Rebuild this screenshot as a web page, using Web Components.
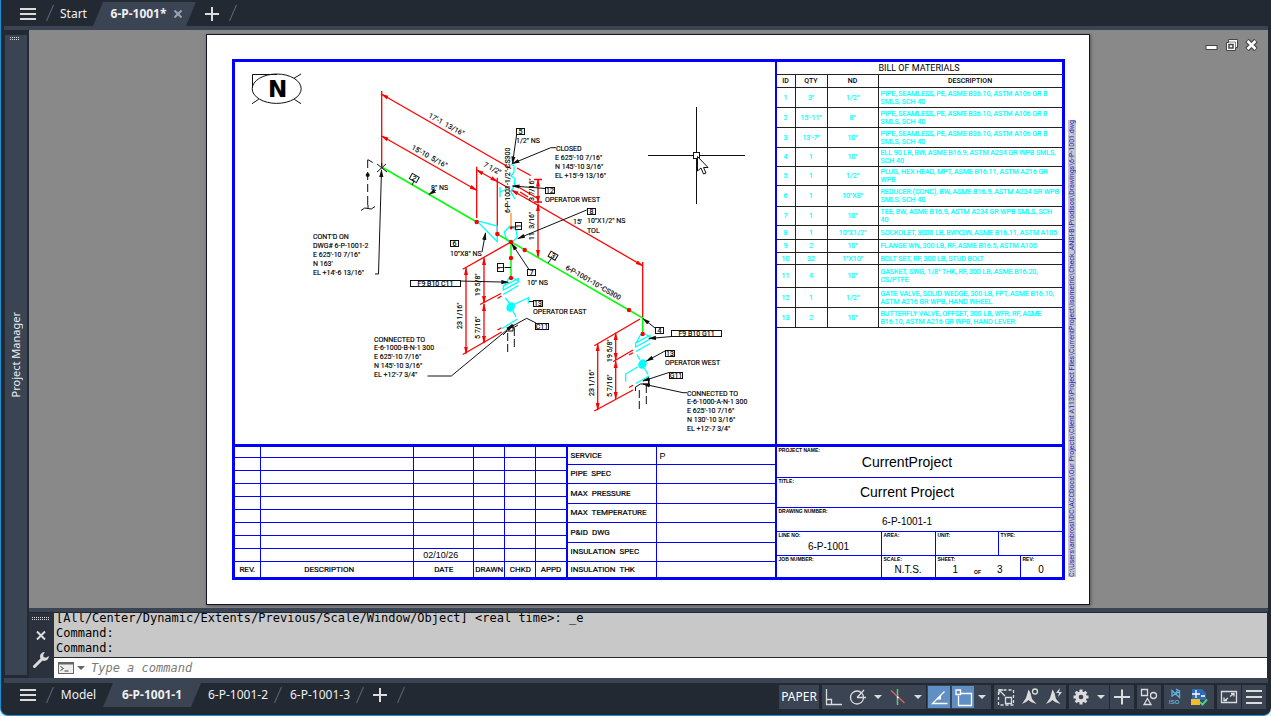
<!DOCTYPE html>
<html lang="en">
<head>
<meta charset="utf-8">
<title>6-P-1001</title>
<style>
  :root {
    --dark: #222933;
    --slate: #3b4453;
    --light: #dcdcdc;
    --edge: #1b8fd0;
    --ink: #0000ff;
    --cyan: #00ffff;
    --ui: "Noto Sans", "Open Sans", sans-serif;
    --mono: "DejaVu Sans Mono", "Liberation Mono", monospace;
    --cad: Roboto, "Liberation Sans", sans-serif;
    --plain: "Liberation Sans", Arial, sans-serif;
  }
  html, body { margin: 0; height: 100%; }
  body { background: #e6eef4; overflow: hidden; font-family: var(--ui); }
</style>
</head>
<body>
<cad-window>
  <tab-strip slot="top" label="Drawings">
    <doc-tab style="min-width:39px">Start</doc-tab>
    <doc-tab active closable style="min-width:103px">6-P-1001*</doc-tab>
  </tab-strip>
  <side-palette slot="side">Project Manager</side-palette>
  <model-canvas slot="canvas">
    <drawing-sheet>
      <iso-drawing slot="drawing"></iso-drawing>
      <bom-table slot="bom"></bom-table>
      <revision-table slot="revisions"></revision-table>
      <spec-table slot="specs"></spec-table>
      <title-block slot="title"></title-block>
      <span slot="path">C:\Users\ambrosl\DC\ACCDocs\Our Projects\Client A113\Project Files\CurrentProject\Isometric\Check_ANSI-B\ProdIsos\Drawings\6-P-1001.dwg</span>
    </drawing-sheet>
  </model-canvas>
  <command-line slot="command"></command-line>
  <tab-strip slot="layouts" label="Layouts" bottom>
    <doc-tab style="min-width:49px">Model</doc-tab>
    <doc-tab active style="min-width:98px">6-P-1001-1</doc-tab>
    <doc-tab divided style="min-width:81px">6-P-1001-2</doc-tab>
    <doc-tab divided style="min-width:82px">6-P-1001-3</doc-tab>
  </tab-strip>
  <status-bar slot="status"></status-bar>
</cad-window>

<script>
const define = (name, html, setup) => {
  const template = document.createElement('template');
  template.innerHTML = html;
  customElements.define(name, class extends HTMLElement {
    constructor() {
      super();
      this.attachShadow({ mode: 'open' }).append(template.content.cloneNode(true));
    }
    connectedCallback() { if (setup) setup(this, this.shadowRoot); }
  });
};

/* ---------- application frame ---------- */
define('cad-window', `
<style>
  :host { display: grid; box-sizing: border-box; height: 100vh; overflow: hidden; background: var(--dark);
    grid-template: 26px 4px minmax(0, 1fr) 4px 66px 5px 32px / 25px minmax(0, 1fr);
    padding: 0 3px 0 3px; border-left: 1px solid var(--edge); border-bottom: 1px solid var(--edge);
    border-radius: 0 0 8px 8px; }
  .top { grid-area: 1 / 1 / 2 / 3; }
  .band { background: var(--slate); }
  .b1 { grid-area: 2 / 1 / 3 / 3; }
  .side { grid-area: 3 / 1 / 6 / 2; display: grid; }
  .canvas { grid-area: 3 / 2 / 4 / 3; min-height: 0; display: grid; }
  .b2 { grid-area: 4 / 2 / 5 / 3; }
  .command { grid-area: 5 / 2 / 6 / 3; display: grid; }
  .b3 { grid-area: 6 / 1 / 7 / 3; }
  .bottom { grid-area: 7 / 1 / 8 / 3; display: flex; justify-content: space-between; }
</style>
<header class="top"><slot name="top"></slot></header>
<div class="band b1"></div>
<aside class="side"><slot name="side"></slot></aside>
<main class="canvas"><slot name="canvas"></slot></main>
<div class="band b2"></div>
<section class="command"><slot name="command"></slot></section>
<div class="band b3"></div>
<footer class="bottom"><slot name="layouts"></slot><slot name="status"></slot></footer>
`);

/* ---------- tab strips ---------- */
define('tab-strip', `
<style>
  :host { display: block; --tab-inset: 2px; --tab-height: 26px; }
  :host([bottom]) { --tab-inset: 0px; --tab-height: 24px; }
  nav { display: flex; height: var(--tab-height); align-items: stretch; }
  button { border: 0; background: none; padding: 0; display: grid; place-items: center; }
  :host(:not([bottom])) button { padding-top: 2px; }
  .menu { width: 16px; margin: 0 10px 0 16px; }
  .add { width: 14px; margin: 0 10px 0 9px; }
  svg { display: block; }
  .slash { width: 8px; height: var(--tab-height); }
</style>
<nav>
  <button class="menu" aria-label="Menu"><svg width="16" height="12"><path d="M0 1h16M0 6h16M0 11h16" stroke="#dcdcdc" stroke-width="2"/></svg></button>
  <svg class="slash" viewBox="0 0 8 24"><path d="M.5 20L7.500 4" stroke="#566070" stroke-width="1.200"/></svg>
  <slot></slot>
  <button class="add" aria-label="New"><svg width="14" height="14"><path d="M7 0v14M0 7h14" stroke="#dcdcdc" stroke-width="2"/></svg></button>
  <svg class="slash" viewBox="0 0 8 24"><path d="M.5 20L7.500 4" stroke="#566070" stroke-width="1.200"/></svg>
</nav>
`, (el, root) => root.querySelector('nav').setAttribute('aria-label', el.getAttribute('label')));

define('doc-tab', `
<style>
  :host { display: flex; box-sizing: border-box; align-items: center; justify-content: center; padding-top: var(--tab-inset); }
  button { border: 0; background: none; padding: 0; color: #f0f0f0; font: 12px/16px var(--ui); white-space: nowrap; }
  :host([active]) { background: var(--slate);
    clip-path: polygon(10px var(--tab-inset), 100% var(--tab-inset), calc(100% - 10px) 100%, 0 100%); }
  :host([active]) button { font-weight: 700; }
  .close, .slash { display: none; }
  :host([closable]) { padding-left: 4px; }
  :host([closable]) .close { display: block; margin-left: 8px; }
  :host([divided]) { justify-content: flex-end; }
  :host([divided]) .slash { display: block; margin-left: 6px; }
  svg { display: block; }
</style>
<button class="name"><slot></slot></button>
<button class="close" aria-label="Close"><svg width="8" height="8"><path d="M.5 .5l7 7M7.500 .5l-7 7" stroke="#9aa3af" stroke-width="2"/></svg></button>
<svg class="slash" width="8" height="24"><path d="M.5 20L7.500 4" stroke="#566070" stroke-width="1.200"/></svg>
`);

/* ---------- docked palette ---------- */
define('side-palette', `
<style>
  :host { display: flex; flex-direction: column; align-items: center; background: var(--slate);
    margin: 5px 2px 3px 1px; }
  .grip { display: block; margin: 2px 3px 0 0; }
  span { writing-mode: vertical-rl; transform: rotate(180deg); color: #f0f0f0;
    font: 11px/20px var(--ui); margin: auto 0; padding-top: 6px; }
</style>
<svg class="grip" width="10" height="4"><path d="M0 .5h10M0 2.500h10" stroke="#dcdcdc" stroke-dasharray="1 1"/></svg><span><slot></slot></span>
`);

/* ---------- drawing canvas ---------- */
define('model-canvas', `
<style>
  :host { display: flex; justify-content: center; position: relative; background: #898989; padding: 4px 0 3px; min-height: 0; }
  .controls { position: absolute; top: 9px; right: 10px; display: flex; gap: 7px; }
  button { border: 0; background: none; padding: 0; width: 13px; height: 12px; }
  svg { display: block; }
</style>
<slot></slot>
<div class="controls">
  <button aria-label="Minimize"><svg width="13" height="12"><rect x="1" y="6.500" width="11" height="4" fill="#fff" stroke="#444"/></svg></button>
  <button aria-label="Restore"><svg width="13" height="12"><path d="M3.500 .5h9v8h-2v3h-9v-8h2z" fill="#fff" stroke="#444"/><path d="M4 5.500h4v3.500H4z" fill="#fff" stroke="#444" stroke-width="1.500"/><path d="M4 3h6.500v5" stroke="#666" stroke-width=".8" fill="none"/></svg></button>
  <button aria-label="Close"><svg width="13" height="12"><path d="M2 1.500l9 9M11 1.500l-9 9" stroke="#444" stroke-width="5"/><path d="M2.500 2l8 8M10.500 2l-8 8" stroke="#fff" stroke-width="2.500"/></svg></button>
</div>
`);

define('drawing-sheet', `
<style>
  :host { display: grid; box-sizing: border-box; flex: 0 1 884px; min-height: 0; margin-right: 2px; background: #fff; border: 1px solid #15152a;
    box-shadow: 1px 1px 3px #555; grid-template-columns: minmax(0, 1fr) 24px; padding: 24px 0 24px 25px; }
  .frame { box-sizing: border-box; border: 3px solid var(--ink); display: grid; min-height: 0;
    grid-template: minmax(0, 1fr) auto / minmax(0, 540fr) minmax(0, 287fr); }
  .drawing { min-height: 0; display: grid; border-bottom: 3px solid var(--ink); }
  .bom { border-left: 2px solid var(--ink); border-bottom: 3px solid var(--ink); }
  .tables { display: grid; grid-template-columns: 333fr 207fr; }
  .title { border-left: 2px solid var(--ink); display: grid; }
  .path { align-self: end; justify-self: start; margin: 0 0 3px 3px; writing-mode: vertical-rl; transform: rotate(180deg);
    background: #c8c8c8; color: #1c1cd8; font: 7px/8px var(--cad); white-space: nowrap; }
</style>
<div class="frame">
  <div class="drawing"><slot name="drawing"></slot></div>
  <div class="bom"><slot name="bom"></slot></div>
  <div class="tables"><slot name="revisions"></slot><slot name="specs"></slot></div>
  <div class="title"><slot name="title"></slot></div>
</div>
<div class="path"><slot name="path"></slot></div>
`);

/* ---------- piping isometric ---------- */
define('iso-drawing', `
<style>
  :host { display: block; min-height: 0; }
  svg { display: block; width: 100%; height: 100%; }
  text { font: 7px var(--cad); fill: #000; white-space: pre; stroke: #000; stroke-width: .15px; }
  .r { stroke: #f00; stroke-width: 1.300; fill: none; }
  .k { stroke: #111; stroke-width: 1; fill: none; }
  .g { stroke: #0f0; stroke-width: 1.500; fill: none; }
  .c { stroke: #0ff; stroke-width: 1.300; fill: none; }
  .m { font-size: 7px; text-anchor: middle; }
  .north { font: 700 23px "DejaVu Sans", sans-serif; text-anchor: middle; }
</style>
<svg viewBox="235 62 540 382" role="img" aria-label="Piping isometric">
  <defs>
    <marker id="ra" markerUnits="userSpaceOnUse" markerWidth="8" markerHeight="5" refX="7" refY="2.500" orient="auto-start-reverse"><path d="M0 .5L8 2.500L0 4.500z" fill="#f00"/></marker>
    <marker id="ka" markerUnits="userSpaceOnUse" markerWidth="8" markerHeight="5" refX="7" refY="2.500" orient="auto-start-reverse"><path d="M0 .4L8 2.500L0 4.600z" fill="#111"/></marker>
  </defs>

  <!-- north symbol -->
  <g class="k"><ellipse cx="276.700" cy="88.700" rx="24.500" ry="14.700"/><path d="M252.500 88V74.500H277M301 74L294 78.300M252 103.700L258.700 99.300M301 103.700L294.300 99.300"/></g>
  <text class="north" x="277.500" y="97">N</text>

  <!-- dimension lines -->
  <g class="r">
    <path d="M381.700 91V166M476.700 166.700V218M497.300 177.700V233M642.700 262V317"/>
    <g marker-start="url(#ra)">
      <path d="M381.700 94.300L503 164"/>
      <path d="M381.700 136L476.700 190.300" marker-end="url(#ra)"/>
      <path d="M476.700 170L497.300 181.500" marker-end="url(#ra)"/>
      <path d="M511.500 190L642.700 265.700" marker-end="url(#ra)"/>
      <path d="M538 179.500V203" marker-end="url(#ra)"/>
      <path d="M538 204V257" marker-end="url(#ra)"/>
      <path d="M466 268V353.500" marker-end="url(#ra)"/>
      <path d="M484 258V303" marker-end="url(#ra)"/>
      <path d="M484 304V343" marker-end="url(#ra)"/>
      <path d="M597.700 344V410" marker-end="url(#ra)"/>
      <path d="M615.700 333V360" marker-end="url(#ra)"/>
      <path d="M615.700 361V399" marker-end="url(#ra)"/>
    </g>
    <path d="M497.300 181.500L510 189M503 164L511 168.500M517 168L530.700 175.500M534 179.500H542M515 185L537 198M534 202H542M520 192l8 5"/>
    <path d="M462.700 269.300L511 242M480 304.500L501 293.500M497.500 298.500l4-2.500M462.700 354.500L501.700 332M497.500 330l4-2.300"/>
    <path d="M594.300 345.700L640 319M613 361.700L633 350M629 355l4-2.300M594.300 411L633 390M629 387.500l4-2.300"/>
  </g>

  <!-- valves, reducers and flanges -->
  <g class="c">
    <path d="M476.700 220.700L497.300 226V241.700z"/>
    <path d="M511 164L514 166V172L511 176L515 178.500L514 184M500 187V197M500 192L507 189M515.500 183L511 192L515 199"/>
    <path d="M510 226L504.300 232L506.700 240L511 242.700L517.300 237.700L516 230z"/>
    <path d="M509 278L503.500 287M513 278L518.300 281M503.300 290V286L518.300 278.500V282z M503.300 294.500L518.300 285.500M505.500 298L510 304M513 305L528.300 297.700V303.500M512.500 310L516 317M502 328.500L517.500 319"/>
    <path d="M641 334L636 343M645 334L650 337M635.700 347V343L650 335.500V339z M636 351.500L650 343.500M637 354.500L640 360M638 366.700L625.700 374V381.700M644.300 368L648 374.500M635.700 383.500L649.500 375.700"/>
  </g>
  <ellipse cx="510.700" cy="307" rx="4" ry="5" fill="#0ff" transform="rotate(30 510.700 307)"/>
  <ellipse cx="642.500" cy="364" rx="4" ry="5" fill="#0ff" transform="rotate(30 642.500 364)"/>

  <!-- pipe runs -->
  <path class="g" d="M381.700 167L476.700 222M497.300 234L642.700 318V334M511 242V278"/>
  <path d="M511 213V227" stroke="#ff9a3c" stroke-width="1.500"/>
  <g fill="#f00"><circle cx="476.700" cy="222" r="2.200"/><circle cx="497.300" cy="234" r="2.200"/><circle cx="511" cy="242" r="2.200"/><circle cx="524.700" cy="250" r="2.200"/><circle cx="511" cy="258" r="2.200"/><circle cx="511" cy="278" r="2.200"/><circle cx="511" cy="228" r="1.500"/><circle cx="629" cy="310" r="2.200"/><circle cx="642.700" cy="334" r="2.200"/></g>

  <!-- continuation mark -->
  <g class="k">
    <path d="M377 164l10 8M377 172l9-8M381.700 163v4"/>
    <path d="M367.700 159.500l5 3M367.700 160v8M367.700 172v8M367.700 184v8M367.700 196v9"/>
    <path d="M361 210.500q4-4 7-2t7-2M368 205v3"/>
    <path d="M375 274H378.500L381.500 170" marker-end="url(#ka)"/>
  </g>
  <circle cx="367.700" cy="175" r="2" fill="#111"/>

  <!-- leaders -->
  <g class="k" marker-end="url(#ka)">
    <path d="M436 190L429 194.500"/>
    <path d="M516.700 134L512.500 163.500"/>
    <path d="M556 147.700H550.700L512.500 163.500"/>
    <path d="M545.700 188.500L512.500 186"/>
    <path d="M586.700 210L518 238.500"/>
    <path d="M529 269.500L511.700 243.500"/>
    <path d="M460 281L508.300 282.200"/>
    <path d="M482 252L485.500 233"/>
    <path d="M536 323L526.700 318.300L507 329"/>
    <path d="M427.500 376H451.300L513 325"/>
    <path d="M655 328L643 318.500"/>
    <path d="M671.700 336.500L649 338.500"/>
    <path d="M665 351L646.500 361"/>
    <path d="M669 372.500L643 381"/>
    <path d="M687 392.700H683L643 384"/>
  </g>
  <path class="k" d="M533 301.500l-4 0M414 181l-2 4M551 259l-3 4M504.500 267.500H511M515 227H511"/>
  <g class="k" stroke-dasharray="8 3"><path d="M507.700 333V352M514.300 328V348M639.300 390V410M646.300 385V405"/></g>
  <path class="k" d="M503 335l4-4h6v-3l5-3M635.500 391v-4l5-3h8v-3M644 380h5v5"/>

  <!-- item number boxes -->
  <g class="k">
    <rect x="516.500" y="128.500" width="8" height="6"/><rect x="545.500" y="187.500" width="9" height="6"/>
    <rect x="587.500" y="208.500" width="8" height="6"/><rect x="515.500" y="222.500" width="6" height="7"/>
    <rect x="497.500" y="263.500" width="6" height="8"/><rect x="527.500" y="269.500" width="8" height="6"/>
    <rect x="450.500" y="240.500" width="8" height="6"/><rect x="410.500" y="280.500" width="50" height="6"/>
    <rect x="533.500" y="300.500" width="9" height="6"/><rect x="535.500" y="323.500" width="13" height="6"/>
    <rect x="655.500" y="327.500" width="8" height="6"/><rect x="671.500" y="330.500" width="50" height="6"/>
    <rect x="665.500" y="350.500" width="9" height="6"/><rect x="669.500" y="372.500" width="13" height="6"/>
    <rect x="410.300" y="175" width="8" height="6" transform="rotate(30 414.300 178)"/>
    <rect x="549" y="252.700" width="8" height="6" transform="rotate(30 553 255.700)"/>
  </g>
  <g class="m">
    <text x="520.500" y="134">5</text><text x="550" y="193">12</text><text x="591.500" y="214">8</text>
    <text x="531.500" y="275">7</text><text x="454.500" y="246">6</text><text x="538" y="306">13</text>
    <text x="542" y="329">C11</text><text x="659.500" y="333">4</text><text x="670" y="356">13</text>
    <text x="676" y="378">G11</text><text x="435.500" y="286">F9 B10 C11</text><text x="696.500" y="336">F9 B10 G11</text>
    <text transform="translate(413 180.500) rotate(30)">2</text><text transform="translate(552 258) rotate(30)">3</text>
    <text transform="translate(503 267.500) rotate(-90)">1</text><text transform="translate(521 226) rotate(-90)">1</text>
  </g>

  <!-- labels -->
  <text transform="translate(428 117) rotate(29)">17'-1  13/16"</text>
  <text transform="translate(411 149) rotate(29)">15'-10  5/16"</text>
  <text transform="translate(483 166) rotate(29)">7 1/2"</text>
  <text x="431" y="190">8" NS</text>
  <text transform="translate(510 213) rotate(-90)">6-P-1001-1/2"-CS300</text>
  <text x="516" y="143">1/2" NS</text>
  <text x="556" y="151">CLOSED</text><text x="555" y="160">E 625'-10 7/16"</text><text x="555" y="169">N 145'-10 3/16"</text><text x="555" y="178">EL +15'-9 13/16"</text>
  <text transform="translate(534 201) rotate(-90)">3 7/16"</text>
  <text transform="translate(534 240) rotate(-90)">11  3/16"</text>
  <text x="545" y="202">OPERATOR WEST</text>
  <text x="573" y="224">15'</text><text x="587" y="223">10"X1/2" NS</text><text x="587" y="233">TOL</text>
  <text transform="translate(565 269) rotate(30)">6-P-1001-10"-CS300</text>
  <text x="527" y="285">10" NS</text>
  <text x="450" y="256">10"X8" NS</text>
  <text x="313" y="239">CONT'D ON</text><text x="313" y="248">DWG# 6-P-1001-2</text><text x="313" y="257">E 625'-10 7/16"</text><text x="313" y="266">N 163'</text><text x="313" y="275">EL +14'-6 13/16"</text>
  <text transform="translate(480 296) rotate(-90)">19 5/8"</text>
  <text transform="translate(462 329) rotate(-90)">23 1/16"</text>
  <text transform="translate(480 339) rotate(-90)">5 7/16"</text>
  <text x="533" y="314">OPERATOR EAST</text>
  <text x="374" y="342">CONNECTED TO</text><text x="374" y="350">E-6-1000-B-N-1 300</text><text x="374" y="359">E 625'-10 7/16"</text><text x="374" y="368">N 145'-10 3/16"</text><text x="374" y="377">EL +12'-7 3/4"</text>
  <text transform="translate(612 362) rotate(-90)">19 5/8"</text>
  <text transform="translate(594 396) rotate(-90)">23 1/16"</text>
  <text transform="translate(612 397) rotate(-90)">5 7/16"</text>
  <text x="665" y="365">OPERATOR WEST</text>
  <text x="687" y="396">CONNECTED TO</text><text x="687" y="404">E-6-1000-A-N-1 300</text><text x="687" y="413">E 625'-10 7/16"</text><text x="687" y="422">N 130'-10 3/16"</text><text x="687" y="431">EL +12'-7 3/4"</text>

  <!-- crosshair and pointer -->
  <path class="k" d="M648 155.500H745M696.500 107V204"/>
  <rect x="693.500" y="152.500" width="6" height="6" fill="#fff" stroke="#111"/>
  <path d="M697.500 156.500V171L701 168L703.500 174L706 173L703.500 167.500H708z" fill="#fff" stroke="#111"/>
</svg>
`);

/* ---------- bill of materials ---------- */
const BOM = [
  [20, '1', '3"', '1/2"', 'PIPE, SEAMLESS, PE, ASME B36.10, ASTM A106 GR B<br>SMLS, SCH 40'],
  [20, '2', `15'-11"`, '8"', 'PIPE, SEAMLESS, PE, ASME B36.10, ASTM A106 GR B<br>SMLS, SCH 40'],
  [20, '3', `13'-7"`, '10"', 'PIPE, SEAMLESS, PE, ASME B36.10, ASTM A106 GR B<br>SMLS, SCH 40'],
  [19, '4', '1', '10"', 'ELL 90 LR, BW, ASME B16.9, ASTM A234 GR WPB SMLS,<br>SCH 40'],
  [19, '5', '1', '1/2"', 'PLUG, HEX HEAD, MPT, ASME B16.11, ASTM A216 GR<br>WPB'],
  [21, '6', '1', '10"X8"', 'REDUCER (CONC), BW, ASME B16.9, ASTM A234 GR WPB<br>SMLS, SCH 40'],
  [19, '7', '1', '10"', 'TEE, BW, ASME B16.9, ASTM A234 GR WPB SMLS, SCH<br>40'],
  [14, '8', '1', '10"X1/2"', 'SOCKOLET, 3000 LB, BWXSW, ASME B16.11, ASTM A105'],
  [13, '9', '2', '10"', 'FLANGE WN, 300 LB, RF, ASME B16.5, ASTM A105'],
  [12, '10', '32', '1"X10"', 'BOLT SET, RF, 300 LB, STUD BOLT'],
  [23, '11', '4', '10"', 'GASKET, SWG, 1/8" THK, RF, 300 LB, ASME B16.20,<br>CS/PTFE'],
  [20, '12', '1', '1/2"', 'GATE VALVE, SOLID WEDGE, 300 LB, FPT, ASME B16.10,<br>ASTM A216 GR WPB, HAND WHEEL'],
  [20, '13', '2', '10"', 'BUTTERFLY VALVE, OFFSET, 300 LB, WFR, RF, ASME<br>B16.10, ASTM A216 GR WPB, HAND LEVER'],
];
define('bom-table', `
<style>
  :host { display: block; }
  table { width: 100%; border-spacing: 0; table-layout: fixed; font: 7px/8px var(--cad); }
  caption { height: 12px; border-bottom: 1px solid #222; font: 9px/12px var(--cad); color: #000; }
  th, td { box-sizing: border-box; padding: 0; border-bottom: 1px solid #222; border-right: 1px solid #222; text-align: center;
    vertical-align: middle; white-space: nowrap; }
  th { font-weight: 500; line-height: 8px; height: 13px; color: #000; }
  td { color: var(--cyan); -webkit-text-stroke: .2px var(--cyan); }
  th:last-child, td:last-child { border-right: 0; }
  td:last-child { text-align: left; padding-left: 2px; }
  col:nth-child(1) { width: 19px; } col:nth-child(2) { width: 32px; } col:nth-child(3) { width: 51px; }
</style>
<table><caption>BILL OF MATERIALS</caption><colgroup><col><col><col><col></colgroup>
<thead><tr><th>ID</th><th>QTY</th><th>ND</th><th>DESCRIPTION</th></tr></thead>
<tbody>${BOM.map(([h, ...cells]) => `<tr style="height:${h}px">${cells.map(c => `<td>${c}</td>`).join('')}</tr>`).join('')}</tbody></table>
`);

/* ---------- revisions ---------- */
define('revision-table', `
<style>
  :host { display: block; }
  table { width: 100%; border-spacing: 0; table-layout: fixed; font: 8px/10px var(--cad); }
  td, th { box-sizing: border-box; padding: 0; height: 13px; border-right: 1px solid var(--ink); border-bottom: 1px solid var(--ink); text-align: center; white-space: nowrap; font-weight: 400; }
  tr:first-child td { height: 11px; }
  tr:last-child th { height: 15px; border-bottom: 0; -webkit-text-stroke: .2px #000; }
  td:last-child, th:last-child { border-right-width: 2px; }
  td { font: 9px/10px var(--plain); padding-right: 6px; }
  .wide { padding-right: 16px; }
  col:nth-child(1) { width: 8%; } col:nth-child(2) { width: 46%; } col:nth-child(3) { width: 18%; } col:nth-child(n+4) { width: auto; }
</style>
<table><colgroup><col><col><col><col><col><col></colgroup>
${'<tr><td></td><td></td><td></td><td></td><td></td><td></td></tr>'.repeat(8)}
<tr><td></td><td></td><td>02/10/26</td><td></td><td></td><td></td></tr>
<tr><th>REV.</th><th class="wide">DESCRIPTION</th><th>DATE</th><th>DRAWN</th><th>CHKD</th><th>APPD</th></tr></table>
`);

/* ---------- line specification ---------- */
const SPECS = [[18, 'SERVICE', 'P'], [19, 'PIPE&nbsp; SPEC', ''], [20, 'MAX&nbsp; PRESSURE', ''], [19, 'MAX&nbsp; TEMPERATURE', ''], [20, 'P&amp;ID&nbsp; DWG', ''], [19, 'INSULATION&nbsp; SPEC', ''], [15, 'INSULATION&nbsp; THK', '']];
define('spec-table', `
<style>
  :host { display: block; }
  table { width: 100%; border-spacing: 0; table-layout: fixed; }
  th, td { box-sizing: border-box; padding: 0 0 0 3px; text-align: left; white-space: nowrap; border-bottom: 1px solid var(--ink); }
  th { width: 43%; border-right: 1px solid var(--ink); font: 8px/10px var(--cad); -webkit-text-stroke: .2px #000; }
  td { font: 9px/10px var(--plain); }
  tr:last-child > * { border-bottom: 0; }
</style>
<table>${SPECS.map(([h, k, v]) => `<tr style="height:${h}px"><th scope="row">${k}</th><td>${v}</td></tr>`).join('')}</table>
`);

/* ---------- title block ---------- */
define('title-block', `
<style>
  :host { display: grid; grid-template-rows: 31px 30px 24px 24px 21px; color: #000; }
  .row { display: grid; border-bottom: 1px solid var(--ink); }
  .row:last-child { border-bottom: 0; }
  .a { grid-template-columns: 105fr 54fr 63fr 63fr; }
  .b { grid-template-columns: 105fr 54fr 85fr 41fr; }
  .cell { border-right: 1px solid var(--ink); display: flex; flex-direction: column; min-width: 0; }
  .cell:last-child { border-right: 0; }
  small { font: 700 5px/6px var(--plain); padding-left: 2px; }
  .v { flex: 1; display: flex; align-items: center; justify-content: center; font: 10px/11px var(--plain); }
  .big { font: 14px/15px var(--plain); padding: 0 24px 6px 0; }
  .wide { padding: 0 24px 2px 0; }
  .sheet { gap: 16px; }
  .sheet i { font: 700 5px/6px var(--plain); padding-top: 4px; }
</style>
<div class="row"><div class="cell"><small>PROJECT NAME:</small><div class="v big">CurrentProject</div></div></div>
<div class="row"><div class="cell"><small>TITLE:</small><div class="v big">Current Project</div></div></div>
<div class="row"><div class="cell"><small>DRAWING NUMBER:</small><div class="v wide">6-P-1001-1</div></div></div>
<div class="row a"><div class="cell"><small>LINE NO:</small><div class="v">6-P-1001</div></div><div class="cell"><small>AREA:</small></div><div class="cell"><small>UNIT:</small></div><div class="cell"><small>TYPE:</small></div></div>
<div class="row b"><div class="cell"><small>JOB NUMBER:</small></div><div class="cell"><small>SCALE:</small><div class="v">N.T.S.</div></div><div class="cell"><small>SHEET:</small><div class="v sheet"><span>1</span><i>OF</i><span>3</span></div></div><div class="cell"><small>REV:</small><div class="v">0</div></div></div>
`);

/* ---------- command window ---------- */
define('command-line', `
<style>
  :host { display: grid; grid-template-columns: 25px minmax(0, 1fr); padding-top: 1px; margin-right: 1px; }
  .grip { background: #2b323e; display: flex; flex-direction: column; align-items: center; padding-right: 2px; }
  .dots { margin: 4px 0 10px; }
  .grip button { border: 0; background: none; padding: 0; margin-bottom: 12px; }
  svg { display: block; }
  .body { display: grid; grid-template-rows: 44px 20px; gap: 1px; }
  .log { background: #c8c8c8; overflow: hidden; display: flex; flex-direction: column; justify-content: flex-end; padding: 0 2px 1px; }
  p { margin: 0; font: 12px/15px var(--mono); color: #000; white-space: pre; flex: none; }
  label { background: #fff; display: flex; align-items: center; padding-left: 4px; gap: 3px; }
  input { flex: 1; border: 0; outline: 0; padding: 0; background: none; font: italic 12px/16px var(--mono); margin-left: 3px; }
  input::placeholder { color: #7a7a7a; opacity: 1; }
</style>
<div class="grip"><svg class="dots" width="17" height="4"><path d="M0 .5h17M0 2.500h17" stroke="#dcdcdc" stroke-dasharray="1 1"/></svg>
  <button aria-label="Close"><svg width="10" height="9"><path d="M1 .5l8 8M9 .5l-8 8" stroke="#dcdcdc" stroke-width="2"/></svg></button>
  <button aria-label="Customize"><svg width="16" height="16"><path d="M1.500 14.500L9 7" stroke="#dcdcdc" stroke-width="3" stroke-linecap="round"/><path d="M11.800 0A4.500 4.500 0 0 0 7.500 6.500L9.500 8.500A4.500 4.500 0 0 0 15.800 4L13 5.800L10.500 5L10.300 2.800z" fill="#dcdcdc"/></svg></button>
</div>
<div class="body">
  <div class="log"><p>[All/Center/Dynamic/Extents/Previous/Scale/Window/Object] &lt;real time&gt;: _e</p><p>Command:</p><p>Command:</p></div>
  <label aria-label="Command"><svg width="16" height="13"><rect x=".5" y=".5" width="15" height="11" fill="#eee" stroke="#666"/><path d="M0 1.500h16" stroke="#666" stroke-width="2"/><path d="M2.500 4.500l3 2-3 2M6.500 9h4" fill="none" stroke="#444"/></svg><svg width="8" height="5"><path d="M0 0h8l-4 4z" fill="#666"/></svg><input type="text" placeholder="Type a command"></label>
</div>
`);

/* ---------- status bar ---------- */
const arrow = label => `<button class="arrow" aria-label="${label}"><svg width="8" height="4"><path d="M0 0h8L4 4z" fill="#dcdcdc"/></svg></button>`;
const icon = (label, body, cls = '') => `<button class="${cls}" aria-label="${label}"><svg viewBox="0 0 24 24">${body}</svg></button>`;
const scaleMark = '<path d="M10.500 4.500L12.500 8L14 14L18.500 19L13 17L10.500 15L8 17L4 19L8 13L9.500 8z" fill="#dcdcdc" stroke="none"/>';
const teeth = [0, 45, 90, 135].map(a => `<path d="M12 4.500v15" stroke-width="3" transform="rotate(${a} 12 12)"/>`).join('');
define('status-bar', `
<style>
  :host { display: flex; gap: 1px; padding: 2px 2px 0 0; align-items: flex-start; }
  .g { display: flex; height: 24px; background: var(--slate); }
  .s { margin-left: 2px; }
  button { border: 0; background: none; padding: 0; width: 24px; height: 24px; display: grid; place-items: center; color: #fff; }
  .paper { width: 40px; font: 12px/16px var(--ui); }
  .arrow { width: 16px; }
  svg { display: block; overflow: visible; }
  button:not(.arrow) > svg { width: 24px; height: 24px; fill: none; stroke: #dcdcdc; stroke-width: 1.300; }
  .snap { padding: 0 1px; }
  .on { width: 22px; height: 22px; background: #5f8fc4; margin: 1px 2px 0 0; }
  .on + .arrow { margin-left: -2px; }
  .files { padding-right: 2px; }
  svg text { font: 700 6px var(--plain); fill: #5fb0e6; stroke: none; }
</style>
<div class="g"><button class="paper">PAPER</button></div>
<div class="g s">${icon('Ortho', '<path d="M4.500 4V19.500H20M4.500 14.500h5v5"/>')}${icon('Polar tracking', '<circle cx="11" cy="12.500" r="6.500"/><path d="M11 12.500h9M11 12.500L18 5"/>')}${arrow('Polar angles')}${icon('Isometric drafting', '<path d="M11.500 4v16" stroke="#4fd07a" stroke-width="1.500"/><path d="M5 5.500L18.500 18" stroke="#e0606a"/><path d="M11 11.500l1.500 1.500" stroke="#fff"/>')}${arrow('Isoplanes')}</div>
<div class="g snap">${icon('Object snap tracking', '<path d="M19.500 17.500H4.500L16.500 5.500" stroke="#fff"/><path d="M8 13.500h5v-5z" fill="#fff" stroke="none"/>', 'on')}${icon('Object snap', '<path d="M9 7.500h10.500v12h-13v-10" stroke="#fff"/><path d="M4 4h4.500v4.500H4z" stroke="#fff"/>', 'on')}${arrow('Snap modes')}</div>
<div class="g s">${icon('Selection cycling', '<path d="M4.500 5h15v15h-15z" stroke-dasharray="3 2"/><path d="M11.500 12.500h6v6h-6z"/><path d="M5 5l6 6M5 9V5h4"/>')}${icon('Annotation visibility', scaleMark + '<circle cx="17" cy="6.500" r="2.500"/>')}${icon('Annotation scale', scaleMark + '<path d="M18 3l-4 5h3l-1 4 4-5h-3z" fill="#dcdcdc" stroke="none"/>')}</div>
<div class="g s">${icon('Workspace', teeth + '<circle cx="12" cy="12" r="4" stroke-width="3.500"/><circle cx="12" cy="12" r="2.300" fill="#3b4453" stroke="none"/>')}${arrow('Workspaces')}</div>
<div class="g">${icon('Annotation monitor', '<path d="M12 4.500v15M4 12h16" stroke-width="2"/>')}</div>
<div class="g s">${icon('Isolate objects', '<path d="M4.500 4.500h6v6h-6z"/><circle cx="16.500" cy="10.500" r="3"/><path d="M10.500 13.500l3.500 6H7z"/>')}</div>
<div class="g s files">${icon('Isometric', '<g stroke="#5fb0e6"><path d="M8 5.500V11L15.500 6.500V12.500zM11.500 8.500l2.500-4M12 4l4 2"/></g><text x="5" y="19">ISO</text>')}${icon('Trusted file', '<path d="M4 4h10l4 4v7H4z" fill="#2e6cb5" stroke="none"/><path d="M3 14h9v6H3z" fill="#f5b92e" stroke="none"/><path d="M4 9h8M8 5v8M13 11h4" stroke="#fff"/><path d="M12 17l2.500 2.500L19 14.500" stroke="#4fd07a" stroke-width="2"/>')}</div>
<div class="g s">${icon('Clean screen', '<path d="M4.500 6.500h15v11h-15z"/><path d="M13 11.500l4-3M14 8.500h3v3M11 13l-4 3M7 12.500v3h3"/>')}</div>
<div class="g">${icon('Customization', '<path d="M4 6h16M4 12h16M4 18h16" stroke-width="2"/>')}</div>
`);
</script>
</body>
</html>
